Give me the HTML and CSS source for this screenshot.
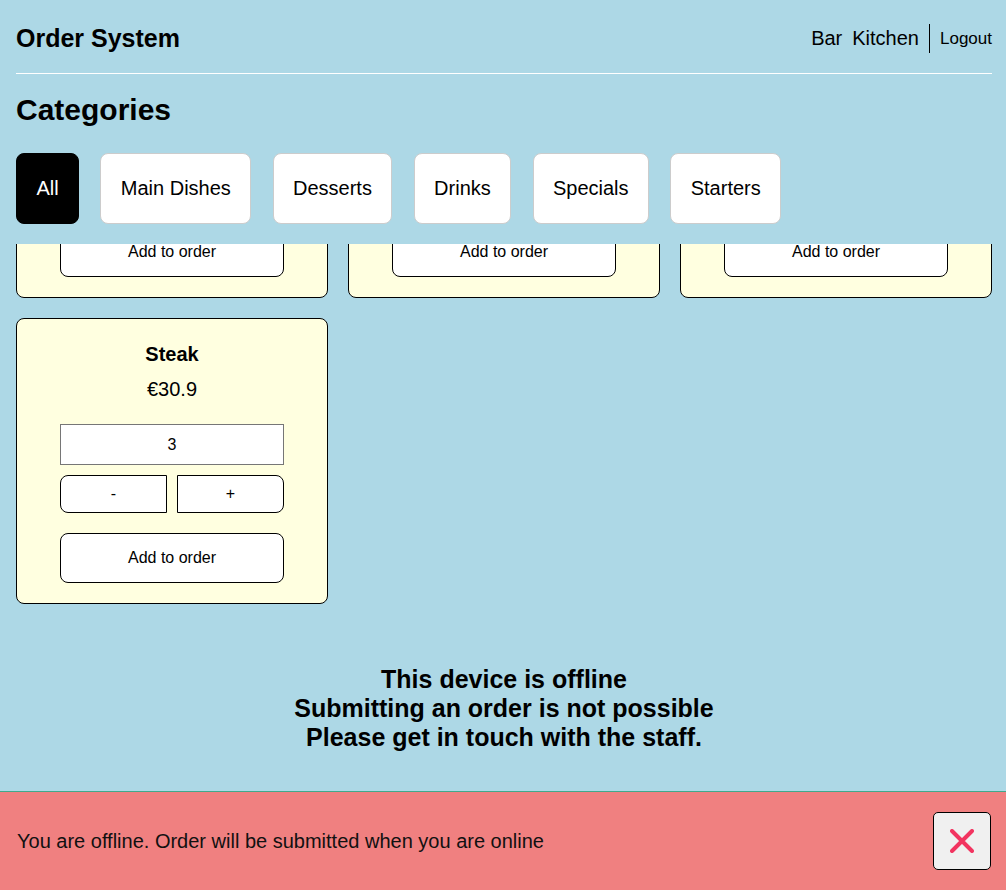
FILE: index.html
```html
<!DOCTYPE html>
<html lang="en">
<head>
<meta charset="utf-8">
<title>Order System</title>
<link rel="stylesheet" href="styles.css">
</head>
<body>
<div class="page">
  <div class="top">
    <header class="header">
      <div class="brand">Order System</div>
      <nav class="nav">
        <a class="nav-link">Bar</a>
        <a class="nav-link">Kitchen</a>
        <a class="nav-link logout">Logout</a>
      </nav>
    </header>
    <h2 class="title">Categories</h2>
    <div class="cats">
      <button class="cat active">All</button>
      <button class="cat">Main Dishes</button>
      <button class="cat">Desserts</button>
      <button class="cat">Drinks</button>
      <button class="cat">Specials</button>
      <button class="cat">Starters</button>
    </div>
  </div>

  <div class="viewport">
    <div class="grid">
      <div class="card">
        <div class="name">Grilled Salmon</div>
        <div class="price">€24.5</div>
        <input class="qty" value="0">
        <div class="steps"><button class="step minus">-</button><button class="step plus">+</button></div>
        <button class="add">Add to order</button>
      </div>
      <div class="card">
        <div class="name">Pasta</div>
        <div class="price">€14.9</div>
        <input class="qty" value="0">
        <div class="steps"><button class="step minus">-</button><button class="step plus">+</button></div>
        <button class="add">Add to order</button>
      </div>
      <div class="card">
        <div class="name">Burger</div>
        <div class="price">€16.5</div>
        <input class="qty" value="0">
        <div class="steps"><button class="step minus">-</button><button class="step plus">+</button></div>
        <button class="add">Add to order</button>
      </div>
      <div class="card">
        <div class="name">Steak</div>
        <div class="price">€30.9</div>
        <input class="qty" value="3">
        <div class="steps"><button class="step minus">-</button><button class="step plus">+</button></div>
        <button class="add">Add to order</button>
      </div>
    </div>
  </div>

  <div class="offline-msg">This device is offline<br>Submitting an order is not possible<br>Please get in touch with the staff.</div>
</div>

<div class="toast">
  <span class="toast-text">You are offline. Order will be submitted when you are online</span>
  <button class="close" aria-label="Close">
    <svg width="24" height="24" viewBox="0 0 24 24"><path d="M2 2 L22 22 M22 2 L2 22" stroke="#f23460" stroke-width="4" stroke-linecap="round" fill="none"/></svg>
  </button>
</div>
</body>
</html>
```

FILE: styles.css
```css
* { box-sizing: border-box; }
html, body { margin: 0; padding: 0; }
body {
  background: #add8e6;
  font-family: "Liberation Sans", Arial, sans-serif;
  color: #000;
  font-size: 20px;
  height: 890px;
  overflow: hidden;
}
.page { padding: 0 14px 0 16px; }
.top { background: #add8e6; }
.header {
  height: 74px;
  border-bottom: 1px solid #fff;
  display: flex;
  align-items: center;
  justify-content: space-between;
  padding-top: 3px;
}
.brand { font-size: 25px; font-weight: bold; }
.nav { display: flex; align-items: center; gap: 10px; }
.nav-link { font-size: 20px; color: #000; }
.nav-link:first-child { margin-left: 1px; }
.logout {
  font-size: 17px;
  border-left: 1px solid #000;
  padding: 5px 0 4px 10px;
  margin-left: 0;
}
.title {
  font-size: 30px;
  font-weight: bold;
  margin: 18px 0 0;
  line-height: 35px;
}
.cats {
  display: flex;
  gap: 21.4px;
  margin-top: 26px;
  padding-bottom: 20px;
}
.cat {
  font-family: inherit;
  font-size: 20px;
  height: 71px;
  padding: 0 19.4px;
  border: 1px solid #ccc;
  border-radius: 8px;
  background: #fff;
  color: #000;
}
.cat.active { background: #000; color: #fff; border-color: #000; }
.viewport {
  height: 360px;
  overflow: hidden;
  display: flex;
  flex-direction: column;
  justify-content: flex-end;
}
.grid {
  display: grid;
  grid-template-columns: repeat(3, 312px);
  gap: 20px;
}
.card {
  background: #ffffe0;
  border: 1px solid #000;
  border-radius: 8px;
  padding: 24px 43px 20px;
  display: flex;
  flex-direction: column;
  align-items: stretch;
  text-align: center;
  height: 286px;
}
.name { font-weight: bold; font-size: 20px; line-height: 23px; }
.price { font-size: 20px; line-height: 23px; margin-top: 12px; }
.qty {
  margin-top: 23px;
  height: 41px;
  width: 100%;
  border: 1px solid #767676;
  background: #fff;
  font-family: inherit;
  font-size: 16px;
  text-align: center;
}
.steps { display: flex; gap: 10px; margin-top: 10px; }
.step {
  flex: 1;
  height: 38px;
  background: #fff;
  border: 1px solid #000;
  font-family: inherit;
  font-size: 16px;
  color: #000;
}
.minus { border-radius: 8px 0 0 8px; }
.plus { border-radius: 0 8px 8px 0; }
.add {
  margin-top: 20px;
  height: 50px;
  background: #fff;
  border: 1px solid #000;
  border-radius: 8px;
  font-family: inherit;
  font-size: 16px;
  color: #000;
}
.offline-msg {
  text-align: center;
  font-weight: bold;
  font-size: 25px;
  line-height: 29px;
  margin-top: 61px;
}
.toast {
  position: fixed;
  left: 0;
  right: 0;
  bottom: 0;
  height: 99px;
  background: #f08080;
  border-top: 1px solid #41a98a;
  display: flex;
  align-items: center;
  justify-content: space-between;
  padding: 0 15px 0 17px;
}
.toast-text { font-size: 20px; color: #111; }
.close {
  width: 58px;
  height: 58px;
  background: #f0f0f0;
  border: 1px solid #000;
  border-radius: 5px;
  display: flex;
  align-items: center;
  justify-content: center;
  padding: 0;
}
```
